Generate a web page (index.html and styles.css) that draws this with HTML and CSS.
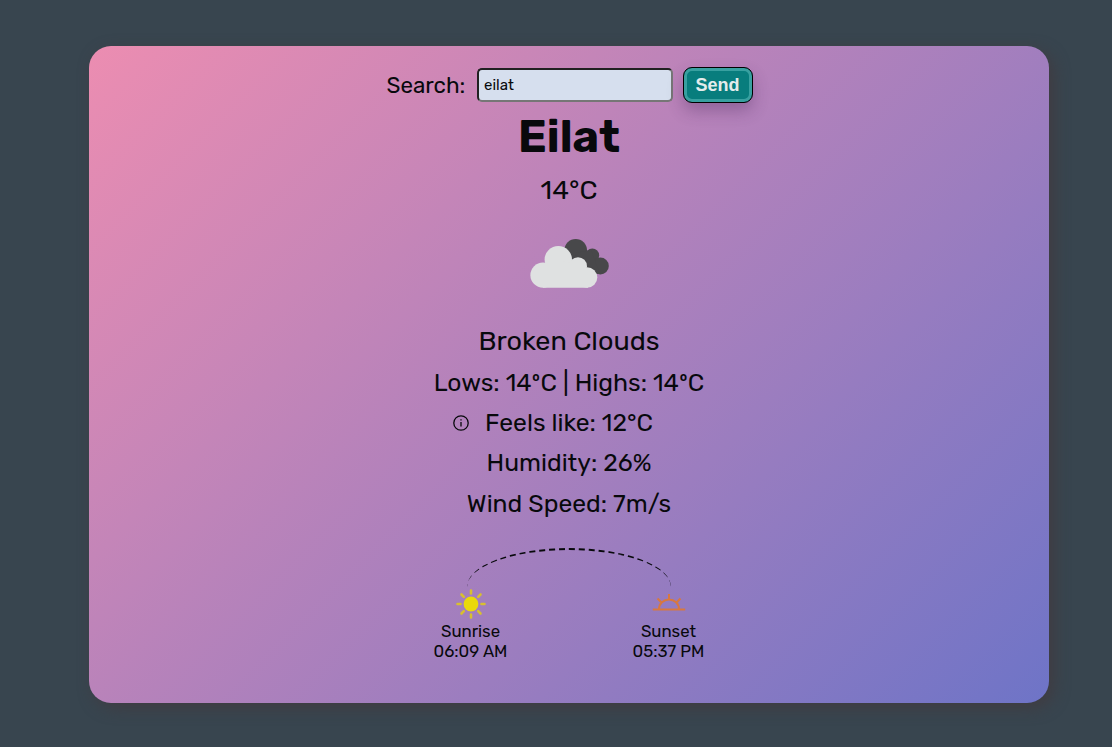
FILE: index.html
```html
<!DOCTYPE html>
<html lang="en">
<head>
<meta charset="utf-8">
<title>Weather</title>
<link rel="stylesheet" href="styles.css">
</head>
<body>
<main class="card">
  <form class="search">
    <label class="search-label" for="city">Search:</label>
    <input class="search-input" id="city" type="text" value="eilat">
    <button class="search-button" type="button">Send</button>
  </form>
  <h1 class="city">Eilat</h1>
  <p class="temp">14°C</p>
  <svg class="weather-icon" viewBox="0 0 100 100">
    <g fill="#48484a">
      <circle cx="56.700" cy="37.300" r="11.300"/>
      <circle cx="73.300" cy="42.300" r="6.900"/>
      <circle cx="81.300" cy="52.900" r="8.500"/>
      <path d="M56 40l16-3 9 24H66z"/>
    </g>
    <g fill="#dfe1e1">
      <circle cx="39.300" cy="46.600" r="13.700"/>
      <circle cx="24" cy="62.200" r="12.600"/>
      <circle cx="59" cy="53.200" r="9"/>
      <circle cx="68" cy="64.500" r="10.300"/>
      <path d="M24 55l14-8 22 5 9 9v13.800H24z"/>
    </g>
  </svg>
  <p class="desc">Broken Clouds</p>
  <p class="row lows">Lows: 14ºC | Highs: 14ºC</p>
  <p class="row feels">
    <svg class="info" viewBox="0 0 16 16"><circle cx="8" cy="8" r="7.200"/><path d="M8 7v4.500M8 4.200v1.300"/></svg>
    <span>Feels like: 12°C</span>
  </p>
  <p class="row humidity">Humidity: 26%</p>
  <p class="row wind">Wind Speed: 7m/s</p>
  <div class="arc"></div>
  <section class="sun-times">
    <div class="sun">
      <svg class="sun-icon" viewBox="0 0 34 32">
        <g stroke="#d8bf30" stroke-width="2.600" stroke-linecap="round"><path d="M17 2.500v3M17 26.500v3M3.500 16h3M27.500 16h3M7.500 6.500l2.300 2.300M24.200 23.200l2.300 2.300M7.500 25.500l2.300-2.300M24.200 8.800l2.300-2.300"/></g>
        <circle cx="17" cy="16" r="7.400" fill="#ead90b"/>
      </svg>
      <span class="sunrise-name">Sunrise</span>
      <span class="sunrise-time">06:09 AM</span>
    </div>
    <div class="sun">
      <svg class="sun-icon" viewBox="0 0 34 32">
        <path fill="none" stroke="#d8783f" stroke-width="2" d="M.8 21.500h32.400M7 21a10 9.500 0 0 1 20 0M17 6v5M5.500 10.500l4 4M28.500 10.500l-4 4"/>
      </svg>
      <span class="sunset-name">Sunset</span>
      <span class="sunset-time">05:37 PM</span>
    </div>
  </section>
</main>
</body>
</html>
```

FILE: styles.css
```css
* { box-sizing: border-box; }
body {
  margin: 0;
  height: 747px;
  padding: 46px 63px 44px 89px;
  background: #38454f;
  color: #08090c;
  font-family: Rubik, Roboto, sans-serif;
  overflow: hidden;
}
.card {
  width: 960px;
  height: 657px;
  padding-top: 20px;
  border-radius: 22px;
  background: linear-gradient(135deg, #ec8db1, #6e74c7);
  box-shadow: 5px 5px 15px #403c42;
  display: flex;
  flex-direction: column;
  align-items: center;
}
p, h1 { margin: 0; white-space: nowrap; }
.search { display: flex; align-items: center; height: 38px; margin: 0; }
.search-label { width: 91px; padding-left: 1px; font-size: 22.400px; }
.search-input {
  width: 196px;
  height: 34px;
  margin-right: 10px;
  padding: 0 5.500px;
  border: 2px inset #767676;
  border-radius: 5px;
  background: #d6dfee;
  color: #08090c;
  font: 15px Rubik, Roboto, sans-serif;
}
.search-button {
  width: 70px;
  height: 36px;
  padding: 0;
  border: 1px solid #000;
  border-radius: 9px;
  background: #087d7d;
  box-shadow: inset 0 0 0 3px #38a0a0, 0 8px 16px rgba(60, 30, 80, 0.3);
  color: #e4ecec;
  font: bold 18px "Liberation Sans", Arial, sans-serif;
}
.city { height: 64px; line-height: 65px; font-size: 45px; font-weight: 700; }
.temp { height: 45px; line-height: 45px; font-size: 27px; }
.weather-icon { width: 100px; height: 100px; }
.desc { height: 50px; line-height: 56px; font-size: 27px; }
.row { height: 40.200px; line-height: 40.200px; font-size: 24.700px; }
.feels { display: flex; align-items: center; gap: 16px; margin-right: 32px; }
.info { width: 16px; height: 16px; fill: none; stroke: #08090c; stroke-width: 1.300; }
.arc {
  width: 204px;
  height: 39px;
  margin-top: 24px;
  border-top: 2px dashed #08090c;
  border-radius: 50% 50% 0 0 / 100% 100% 0 0;
}
.sun-times { display: flex; justify-content: center; gap: 124px; padding-left: 1px; }
.sun { width: 74px; display: flex; flex-direction: column; align-items: center; font-size: 16.800px; line-height: 20px; white-space: nowrap; }
.sun-icon { width: 34px; height: 34px; }
```
